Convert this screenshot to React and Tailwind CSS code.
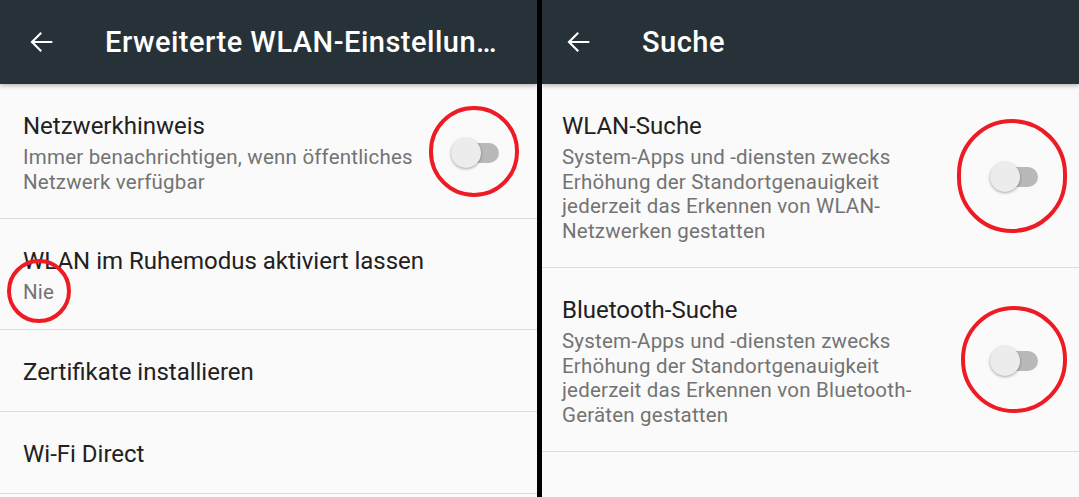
import React from 'react';

const BackArrow = () => (
  <svg width="34" height="34" viewBox="0 0 24 24" className="shrink-0">
    <path
      d="M20 11.25H7.4l5.3-5.3L11.65 4.9 4.55 12l7.1 7.1 1.05-1.05-5.3-5.3H20z"
      fill="#ffffff"
    />
  </svg>
);

const Toggle = () => (
  <div className="relative w-[48px] h-[30px] shrink-0">
    <div className="absolute left-0 right-0 top-[5px] h-[20px] rounded-full bg-[#b9b9b9]" />
    <div className="absolute left-0 top-0 w-[30px] h-[30px] rounded-full bg-[#ececec] shadow-[0_1px_3px_rgba(0,0,0,0.35)]" />
  </div>
);

const Row = ({ title, lines = [], toggle, padLeft, padRight }) => (
  <div className={`flex items-center border-b border-[#dcdcdc] pt-[27px] pb-[24px] ${padLeft} ${padRight}`}>
    <div className="flex-1 min-w-0">
      <div className="text-[24px] leading-[30px] text-[#212121] whitespace-nowrap">{title}</div>
      {lines.length > 0 && (
        <div className="mt-[4px] text-[20.5px] leading-[24.5px] tracking-[0.2px] text-[#737373]">
          {lines.map((l) => (
            <div key={l} className="whitespace-nowrap">{l}</div>
          ))}
        </div>
      )}
    </div>
    {toggle && <Toggle />}
  </div>
);

const Header = ({ title, arrowLeft, titleLeft }) => (
  <div className="relative z-10 h-[84px] bg-[#263238] flex items-center shadow-[0_2px_4px_rgba(0,0,0,0.25)]">
    <div className={arrowLeft}>
      <BackArrow />
    </div>
    <div className={`${titleLeft} pt-[2px] text-[29px] tracking-[0.5px] font-medium text-white whitespace-nowrap`}>
      {title}
    </div>
  </div>
);

export default function App() {
  return (
    <div className="relative flex w-[1079px] h-[497px] overflow-hidden bg-[#fafafa] font-['Roboto',sans-serif]">
      {/* left screen */}
      <div className="w-[537px] shrink-0 flex flex-col">
        <Header title="Erweiterte WLAN-Einstellun…" arrowLeft="ml-[24px]" titleLeft="ml-[47px]" />
        <Row
          title="Netzwerkhinweis"
          lines={['Immer benachrichtigen, wenn öffentliches', 'Netzwerk verfügbar']}
          toggle
          padLeft="pl-[23px]"
          padRight="pr-[38px]"
        />
        <Row title="WLAN im Ruhemodus aktiviert lassen" lines={['Nie']} padLeft="pl-[23px]" padRight="pr-[38px]" />
        <Row title="Zertifikate installieren" padLeft="pl-[23px]" padRight="pr-[38px]" />
        <Row title="Wi-Fi Direct" padLeft="pl-[23px]" padRight="pr-[38px]" />
      </div>

      <div className="w-[5px] shrink-0 bg-black" />

      {/* right screen */}
      <div className="flex-1 flex flex-col">
        <Header title="Suche" arrowLeft="ml-[19px]" titleLeft="ml-[47px]" />
        <Row
          title="WLAN-Suche"
          lines={[
            'System-Apps und -diensten zwecks',
            'Erhöhung der Standortgenauigkeit',
            'jederzeit das Erkennen von WLAN-',
            'Netzwerken gestatten',
          ]}
          toggle
          padLeft="pl-[20px]"
          padRight="pr-[41px]"
        />
        <Row
          title="Bluetooth-Suche"
          lines={[
            'System-Apps und -diensten zwecks',
            'Erhöhung der Standortgenauigkeit',
            'jederzeit das Erkennen von Bluetooth-',
            'Geräten gestatten',
          ]}
          toggle
          padLeft="pl-[20px]"
          padRight="pr-[41px]"
        />
      </div>

      {/* red annotation circles */}
      <div className="absolute left-[429px] top-[106px] w-[90px] h-[91px] rounded-full border-[4px] border-[#ed1c24] z-20" />
      <div className="absolute left-[7px] top-[259px] w-[64px] h-[64px] rounded-full border-[4px] border-[#ed1c24] z-20" />
      <div className="absolute left-[957px] top-[119px] w-[110px] h-[114px] rounded-full border-[4px] border-[#ed1c24] z-20" />
      <div className="absolute left-[961px] top-[306px] w-[106px] h-[107px] rounded-full border-[4px] border-[#ed1c24] z-20" />
    </div>
  );
}
